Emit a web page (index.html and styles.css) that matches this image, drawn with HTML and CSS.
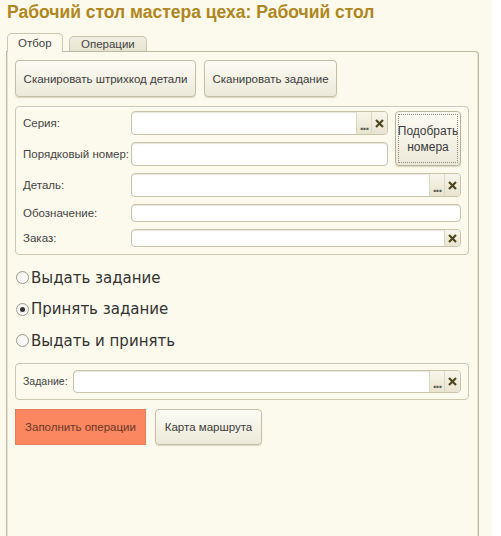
FILE: index.html
```html
<!DOCTYPE html>
<html lang="ru">
<head>
<meta charset="UTF-8" />
<title>Рабочий стол мастера цеха</title>
<link rel="stylesheet" href="styles.css">
</head>
<body>
  <div class="page">
    <h1 class="title">Рабочий стол мастера цеха: Рабочий стол</h1>

    <div class="tabs">
      <div class="tab tab-active">Отбор</div>
      <div class="tab">Операции</div>
    </div>

    <div class="panel">
      <div class="btn-row">
        <button class="btn btn-scan1">Сканировать штрихкод детали</button>
        <button class="btn btn-scan2">Сканировать задание</button>
      </div>

      <div class="group group-filter">
        <div class="label">Серия:</div>
        <div class="field">
          <div class="input"></div>
          <div class="fbtn dots">...</div>
          <div class="fbtn clear"><svg width="9" height="9" viewBox="0 0 9 9"><path d="M1 1L8 8M8 1L1 8" stroke="#4d481c" stroke-width="2.2"/></svg></div>
        </div>
        <button class="btn btn-pick">Подобрать<br>номера</button>

        <div class="label">Порядковый номер:</div>
        <div class="field"><div class="input"></div></div>

        <div class="label">Деталь:</div>
        <div class="field wide">
          <div class="input"></div>
          <div class="fbtn dots">...</div>
          <div class="fbtn clear"><svg width="9" height="9" viewBox="0 0 9 9"><path d="M1 1L8 8M8 1L1 8" stroke="#4d481c" stroke-width="2.2"/></svg></div>
        </div>

        <div class="label">Обозначение:</div>
        <div class="field wide short"><div class="input"></div></div>

        <div class="label">Заказ:</div>
        <div class="field wide short">
          <div class="input"></div>
          <div class="fbtn clear"><svg width="9" height="9" viewBox="0 0 9 9"><path d="M1 1L8 8M8 1L1 8" stroke="#4d481c" stroke-width="2.2"/></svg></div>
        </div>
      </div>

      <div class="radios">
        <div class="radio"><span class="circle"></span>Выдать задание</div>
        <div class="radio"><span class="circle checked"></span>Принять задание</div>
        <div class="radio"><span class="circle"></span>Выдать и принять</div>
      </div>

      <div class="group group-task">
        <div class="label label-small">Задание:</div>
        <div class="field">
          <div class="input"></div>
          <div class="fbtn dots">...</div>
          <div class="fbtn clear"><svg width="9" height="9" viewBox="0 0 9 9"><path d="M1 1L8 8M8 1L1 8" stroke="#4d481c" stroke-width="2.2"/></svg></div>
        </div>
      </div>

      <div class="btn-row btn-row-bottom">
        <button class="btn btn-fill">Заполнить операции</button>
        <button class="btn btn-route">Карта маршрута</button>
      </div>
    </div>
  </div>
</body>
</html>
```

FILE: styles.css
```css
body {
  margin: 0;
  background: #ffffff;
  font-family: 'Liberation Sans', Arial, sans-serif;
  color: #3b3b3b;
}
.page {
  width: 492px;
  height: 536px;
  background: #fcfaec;
  display: flex;
  flex-direction: column;
  overflow: hidden;
}
.title {
  margin: 0;
  padding: 2px 7px 0 7px;
  font-size: 17.5px;
  line-height: 20px;
  font-weight: bold;
  color: #b08620;
  white-space: nowrap;
}
/* tabs */
.tabs {
  display: flex;
  align-items: flex-end;
  gap: 6px;
  height: 19px;
  margin-top: 11px;
  margin-bottom: -1px;
  padding-left: 7px;
}
.tab {
  height: 16px;
  box-sizing: border-box;
  padding: 0 11px;
  border: 1px solid #c9c5ae;
  border-bottom: none;
  border-radius: 5px 5px 0 0;
  background: linear-gradient(#f1efe1, #e6e3d0);
  font-size: 11.5px;
  line-height: 15px;
  color: #444;
}
.tab-active {
  position: relative;
  z-index: 1;
  height: 19px;
  width: 56px;
  padding: 0 10px;
  line-height: 18px;
  background: #fcfaec;
}
/* panel */
.panel {
  flex: 1;
  width: 473px;
  box-sizing: border-box;
  margin-left: 6px;
  padding: 8px 9px 0 8px;
  border: 1px solid #bdb9a2;
  border-bottom: none;
  border-radius: 0 4px 0 0;
  box-shadow: inset 1px 0 0 #e6e3d2, inset -1px 0 0 #e6e3d2;
}
.btn-row {
  display: flex;
  gap: 8px;
}
.btn {
  height: 37px;
  box-sizing: border-box;
  padding: 0;
  border: 1px solid #c4c0a7;
  border-radius: 4px;
  background: linear-gradient(#fdfcf4, #ece9d9);
  box-shadow: 0 1px 1px rgba(150, 145, 115, 0.35);
  font-family: 'Liberation Sans', Arial, sans-serif;
  font-size: 11.5px;
  color: #3b3b3b;
  white-space: nowrap;
}
.btn-scan1 {
  width: 181px;
}
.btn-scan2 {
  width: 133px;
}
/* group boxes */
.group {
  border: 1px solid #cbc7b0;
  border-radius: 4px;
  box-shadow: 0 1px 0 #fff inset;
}
.group-filter {
  margin-top: 9px;
  padding: 4px 7px 7px 7px;
  display: grid;
  grid-template-columns: 108px 1fr 73px;
  grid-template-rows: 24px 24px 24px 18px 18px;
  row-gap: 7px;
}
.label {
  font-size: 11.5px;
  display: flex;
  align-items: center;
  color: #444;
  white-space: nowrap;
}
.label-small {
  font-size: 10.5px;
}
.field {
  display: flex;
  background: #fff;
  border: 1px solid #c9c4a9;
  border-radius: 4px;
  overflow: hidden;
  box-shadow: inset 0 1px 1px rgba(160, 155, 125, 0.25);
}
.field .input {
  flex: 1;
}
.field.wide {
  grid-column: 2 / 4;
}
.fbtn {
  width: 15px;
  border-left: 1px solid #ddd8c0;
  background: linear-gradient(#f8f6eb, #e8e4d0);
  display: flex;
  align-items: center;
  justify-content: center;
}
.fbtn.dots {
  align-items: flex-end;
  font-size: 14px;
  font-weight: bold;
  line-height: 15px;
  color: #555;
  letter-spacing: -1px;
  padding-bottom: 1px;
  box-sizing: border-box;
}
.btn-pick {
  grid-column: 3;
  grid-row: 1 / 3;
  margin-left: 7px;
  height: 55px;
  border-color: #b9b59c;
  font-size: 12px;
  line-height: 16px;
  outline: 1px dotted #8a8a80;
  outline-offset: -4px;
}
/* radio buttons */
.radios {
  padding: 7px 0 6px 1px;
}
.radio {
  height: 31.5px;
  display: flex;
  align-items: center;
  font-family: 'DejaVu Sans', sans-serif;
  font-size: 15px;
  color: #333;
}
.circle {
  width: 13px;
  height: 13px;
  box-sizing: border-box;
  border: 1px solid #9c9a8c;
  border-radius: 50%;
  background: linear-gradient(#f4f3ee, #ffffff);
  margin-right: 2px;
  display: flex;
  align-items: center;
  justify-content: center;
}
.circle.checked::after {
  content: "";
  width: 5px;
  height: 5px;
  border-radius: 50%;
  background: #333;
}
.group-task {
  display: flex;
  padding: 6px 7px;
}
.group-task .label {
  width: 50px;
}
.group-task .field {
  flex: 1;
  height: 23px;
  box-sizing: border-box;
}
.btn-row-bottom {
  margin-top: 9px;
  gap: 9px;
}
.btn-fill {
  width: 131px;
  height: 36px;
  border: 1px solid #e37c5a;
  border-radius: 0;
  background: #fa8760;
  box-shadow: none;
  color: #6b3626;
}
.btn-route {
  width: 107px;
  height: 36px;
}
```
